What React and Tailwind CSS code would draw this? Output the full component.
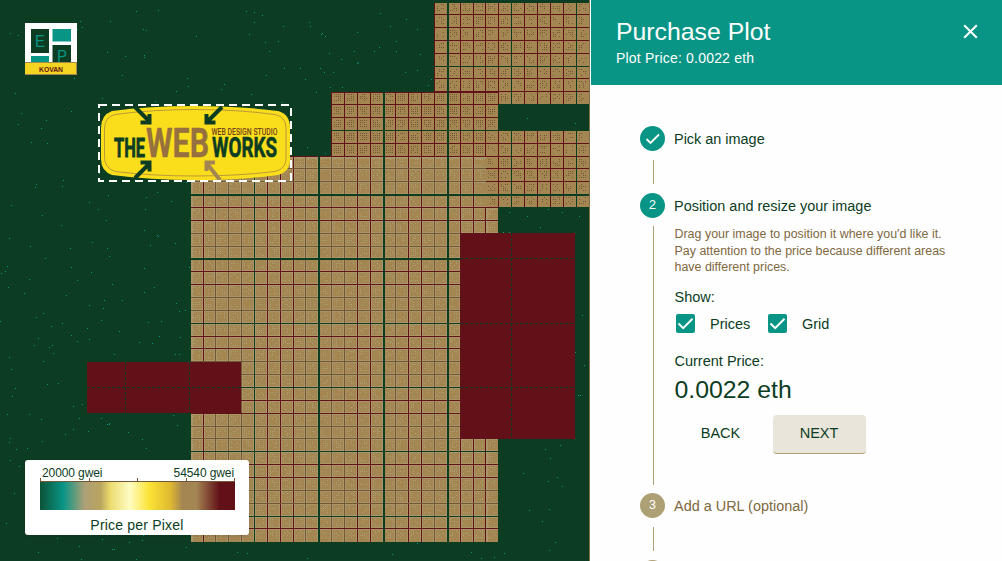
import React from "react";
import { X } from "lucide-react";

const PITCH = 12.86;
const COLS = Array.from({ length: 47 }, (_, i) => ({ at: 254 + (i - 19) * PITCH, major: (i - 19) % 5 === 0, i }));
const ROWS = Array.from({ length: 44 }, (_, i) => ({ at: 1.2 + i * PITCH, major: i % 5 === 0, i }));
const DARK = "#0c3d23";
const RED = "#631119";
const BROWN = "#735634";
const RED_COLS = [15, 20, 21, 22, 27, 28, 31, 32, 35, 36, 37];

const noise = (n) => {
  const v = Math.sin(n * 127.1 + 11.7) * 43758.5453;
  return v - Math.floor(v);
};

function specks(x, y, w, h, count, seed) {
  let d = "";
  for (let i = 0; i < count; i++) {
    const px = x + Math.floor(noise(seed + i * 2) * w);
    const py = y + Math.floor(noise(seed + i * 2 + 1) * h);
    d += `M${px} ${py}h1v1h-1z`;
  }
  return d;
}

function lattice(x, y, w, h, chance, seed) {
  let d = "";
  let n = seed;
  for (const c of COLS) {
    for (const r of ROWS) {
      const cx = Math.round(c.at) + 3;
      const cy = Math.round(r.at) + 3;
      if (cx < x || cy < y || cx + 9 > x + w + 1 || cy + 9 > y + h + 1) continue;
      for (let a = 0; a < 8; a += 2) {
        for (let b = 0; b < 8; b += 2) {
          n += 1;
          if (noise(n) < chance) d += `M${cx + a} ${cy + b}h1v1h-1z`;
        }
      }
    }
  }
  return d;
}

function Region({ x, y, w, h, fill, speck, chance, edge, seed }) {
  const cols = COLS.filter((c) => c.at >= x - 1 && c.at <= x + w - 1);
  const rows = ROWS.filter((r) => r.at >= y - 1 && r.at <= y + h - 1);
  const left = (c, by) => Math.max(x, Math.round(c.at) - by);
  const top = (r, by) => Math.max(y, Math.round(r.at) - by);
  return (
    <g shapeRendering="crispEdges">
      <rect x={x} y={y} width={w} height={h} fill={fill} />
      <path d={lattice(x, y, w, h, chance, seed)} fill={speck} />
      {edge && cols.map((c) => <rect key={c.i} x={left(c, 1)} y={y} width={3} height={h} fill={edge} opacity="0.6" />)}
      {edge && rows.map((r) => <rect key={r.i} x={x} y={top(r, 1)} width={w} height={3} fill={edge} opacity="0.6" />)}
      {cols.filter((c) => !c.major).map((c) => (
        <rect key={c.i} x={left(c, 0)} y={y} width={1} height={h} fill={!edge || RED_COLS.includes(c.i) ? RED : BROWN} />
      ))}
      {rows.filter((r) => !r.major).map((r) => (
        <rect key={r.i} x={x} y={top(r, 0)} width={w} height={1} fill={!edge || r.i % 5 === 1 || r.i % 5 === 2 ? RED : BROWN} />
      ))}
      {cols.filter((c) => c.major).map((c) => <rect key={c.i} x={left(c, 0)} y={y} width={c.at > 300 && c.at < 460 ? 2 : 1} height={h} fill={DARK} />)}
      {rows.filter((r) => r.major).map((r) => <rect key={r.i} x={x} y={top(r, 0)} width={w} height={r.at > 180 && r.at < 300 ? 2 : 1} fill={DARK} />)}
    </g>
  );
}

function PlotMap() {
  return (
    <svg className="block" width="590" height="561" viewBox="0 0 590 561">
      <rect width="590" height="561" fill={DARK} />
      <path d={specks(0, 0, 589, 561, 620, 5)} fill="#099586" shapeRendering="crispEdges" />
      <Region x={434} y={2} w={155} h={102} fill="#a48653" speck={BROWN} chance={0.5} seed={900} />
      <Region x={331} y={92} w={167} h={64} fill="#a48653" speck={BROWN} chance={0.85} seed={4000} />
      <Region x={485} y={130} w={104} h={77} fill="#a48653" speck={BROWN} chance={0.5} seed={9000} />
      <Region x={190} y={156} w={296} h={386} fill="#a48653" speck="#aea075" chance={0.4} edge="#aea075" seed={20000} />
      <Region x={485} y={207} w={13} h={335} fill="#a48653" speck="#aea075" chance={0.4} edge="#aea075" seed={70000} />
      <g shapeRendering="crispEdges">
        <rect x="460" y="233" width="115" height="206" fill={RED} />
        <rect x="87" y="362" width="154" height="51" fill={RED} />
        <path d="M511.500 233V439M460 258.500H575M460 323.500H575M460 387.500H575M125.500 362V413M189.500 362V413M87 387.500H241" stroke={DARK} strokeWidth="1" strokeDasharray="3 2" fill="none" />
        <rect x="589" width="1" height="561" fill="#83704a" />
      </g>
    </svg>
  );
}

function Badge() {
  return (
    <svg width="52" height="52" viewBox="0 0 52 52" fontFamily="Liberation Sans, sans-serif">
      <rect width="52" height="52" fill="#fff" />
      <path d="M6 6h18v24H6zM27.500 22H46v18H27.500z" fill={DARK} />
      <path d="M27.500 6H46v12.500H27.500zM6 33h18v7H6z" fill="#099586" />
      <text x="10" y="24" fontSize="17" textLength="10" lengthAdjust="spacingAndGlyphs" fill="#099586">E</text>
      <text x="32" y="39" fontSize="16" textLength="10" lengthAdjust="spacingAndGlyphs" fill="#099586">P</text>
      <rect y="39" width="52" height="13" fill="#f4d522" />
      <path d="M0 39.500H51.500V51.500H0" fill="none" stroke="#a48653" />
      <text x="14" y="48.500" fontSize="8" fontWeight="bold" textLength="24" lengthAdjust="spacingAndGlyphs" fill={RED}>KOVAN</text>
    </svg>
  );
}

function PlacedImage() {
  return (
    <svg className="overflow-visible" width="196" height="80" viewBox="97 103 196 80" fontWeight="bold">
      <path d="M112 111Q150 106 194 106Q240 106 278 111Q290 114 290 128V159Q290 172 278 175Q240 180 194 180Q150 180 112 175Q101 171 101 159V128Q101 115 112 111Z" fill="#fadd1b" />
      <path d="M115 114.500Q152 109.500 194 109.500Q238 109.500 275 114.500Q286 117 286 128V158Q286 169 275 171.500Q238 176 194 176Q152 176 115 171.500Q104.500 168 104.500 157V129Q104.500 117 115 114.500Z" fill="none" stroke="#b4913c" strokeWidth="0.9" />
      <g fill="none" stroke={DARK} strokeWidth="4">
        <path d="M135 107L149 121M149.500 114V122.500H140.500" />
        <path d="M222 107L208 121M206.500 114V122.500H215.500" />
        <path d="M135 178L149 164M149.500 171.500V162.500H140.500" />
        <path d="M220 180L208 165M206.500 171V162.500H215" stroke="#a48653" />
      </g>
      <g fontFamily="Roboto, sans-serif">
        <text x="114" y="157" fontSize="25" textLength="31" lengthAdjust="spacingAndGlyphs" fill={DARK} stroke={DARK} strokeWidth="0.8">THE</text>
        <text x="146" y="157" fontSize="41" textLength="63" lengthAdjust="spacingAndGlyphs" fill="#96703f" stroke="#96703f" strokeWidth="0.3">WEB</text>
        <text x="212" y="157" fontSize="27.500" textLength="65" lengthAdjust="spacingAndGlyphs" fill={DARK} stroke={DARK} strokeWidth="0.6">WORKS</text>
        <text x="211.500" y="134.500" fontSize="9" fontWeight="500" textLength="66" lengthAdjust="spacingAndGlyphs" fill="#74421f">WEB DESIGN STUDIO</text>
      </g>
      <rect x="99" y="105" width="192" height="76" fill="none" stroke="#fff" strokeWidth="2" strokeDasharray="8 5" />
    </svg>
  );
}

function Legend() {
  return (
    <div className="h-[75px] w-[224px] rounded-[3px] bg-white px-[15px] pt-[5px] text-[#0c3d23] shadow">
      <div className="flex h-4 justify-between pl-[2px] text-[12px] leading-4 tracking-[-0.1px]">
        <span>20000 gwei</span>
        <span>54540 gwei</span>
      </div>
      <svg className="block" width="196" height="29" viewBox="0 0 196 29">
        <defs>
          <linearGradient id="price-scale">
            <stop offset="0" stopColor="#0c5337" />
            <stop offset="0.12" stopColor="#099586" />
            <stop offset="0.23" stopColor="#aea075" />
            <stop offset="0.31" stopColor="#b9a45f" />
            <stop offset="0.36" stopColor="#ecdb6e" />
            <stop offset="0.46" stopColor="#fffcc4" />
            <stop offset="0.56" stopColor="#fbe335" />
            <stop offset="0.67" stopColor="#dfb831" />
            <stop offset="0.73" stopColor="#a48653" />
            <stop offset="0.8" stopColor="#a48653" />
            <stop offset="0.92" stopColor={RED} />
            <stop offset="1" stopColor={RED} />
          </linearGradient>
        </defs>
        <rect y="0" width="195" height="29" fill="url(#price-scale)" />
        <path d="M0 0.500H195" stroke={BROWN} />
      </svg>
      <div className="mt-[5px] text-center text-[14px] leading-5 tracking-[0.2px]">Price per Pixel</div>
      <svg className="absolute left-[15px] top-[18px]" width="196" height="4"><path d="M.5 0V4M49.500 0V4M97.500 0V4M146.500 0V4M194.500 0V4" stroke={BROWN} /></svg>
    </div>
  );
}

function Check({ round }) {
  return round ? (
    <svg width="25" height="25" viewBox="0 0 25 25">
      <circle cx="12.500" cy="12.500" r="12.500" fill="#099586" />
      <path d="M6.500 13L10.500 17L19 8.500" fill="none" stroke="#fff" strokeWidth="1.800" />
    </svg>
  ) : (
    <svg width="19" height="19" viewBox="0 0 19 19">
      <rect width="19" height="19" rx="2" fill="#099586" />
      <path d="M2.500 9.500L7.200 14.200L16.500 4.800" fill="none" stroke="#fff" strokeWidth="2" />
    </svg>
  );
}

function StepLabel({ icon, children, muted }) {
  return (
    <div className={muted ? "flex h-[25px] items-center gap-[9px] text-[#80683f]" : "flex h-[25px] items-center gap-[9px]"}>
      {icon}
      <span className="text-[14.45px] leading-5">{children}</span>
    </div>
  );
}

function Connector() {
  return <div className="my-[9px] ml-[13px] h-6 w-px bg-[#aea075]" />;
}

export default function App() {
  return (
    <div className="flex h-[561px] w-[1002px] overflow-hidden bg-white font-['Liberation_Sans',Arial,sans-serif] text-[#0c3d23]">
      <main className="relative h-[561px] w-[590px] shrink-0">
        <PlotMap />
        <div className="absolute left-[25px] top-[23px]"><Badge /></div>
        <div className="absolute left-[97px] top-[103px]"><PlacedImage /></div>
        <div className="absolute left-[25px] top-[460px]"><Legend /></div>
      </main>
      <aside className="ml-px flex w-[411px] flex-col bg-[#fefefe]">
        <header className="flex h-[85px] shrink-0 justify-between bg-[#099586] pl-[25px] pr-[21px] pt-[17px] text-white">
          <div>
            <h1 className="text-[24.8px] leading-[29px]">Purchase Plot</h1>
            <p className="mt-[2px] text-[14px] leading-5 tracking-[0.2px]">Plot Price: 0.0022 eth</p>
          </div>
          <X className="mt-[4px]" size={21} strokeWidth={1.9} viewBox="2 2 20 20" strokeLinecap="butt" />
        </header>
        <div className="pl-[49px] pt-[41px]">
          <StepLabel icon={<Check round />}>Pick an image</StepLabel>
          <Connector />
          <StepLabel icon={<span className="flex size-[25px] items-center justify-center rounded-full bg-[#099586] text-[12.5px] text-white">2</span>}>
            Position and resize your image
          </StepLabel>
          <div className="mb-2 ml-[13px] mt-2 h-[259px] border-l border-[#aea075] pl-[20.5px]">
            <p className="text-[12.45px] leading-[16.5px] text-[#80683f]">
              Drag your image to position it where you'd like it.
              <br />
              Pay attention to the price because different areas
              <br />
              have different prices.
            </p>
            <p className="mt-[11px] text-[14.5px] leading-5">Show:</p>
            <div className="mt-[7px] flex h-[19px] items-center pl-[1.5px] text-[14.5px] leading-5">
              <Check />
              <span className="relative top-px ml-[15px] w-[58px]">Prices</span>
              <Check />
              <span className="relative top-px ml-[15px]">Grid</span>
            </div>
            <p className="mt-[18px] text-[14.5px] leading-5">Current Price:</p>
            <p className="mt-[4px] text-[24.8px] leading-[30px]">0.0022 eth</p>
            <div className="mt-[10px] flex h-[38px] text-[14.5px]">
              <button className="h-[38px] w-[92px]">BACK</button>
              <button className="ml-[6px] h-[39px] w-[93px] rounded-[4px] border-b border-[#aea075] bg-[#e9e5db] pt-px">NEXT</button>
            </div>
          </div>
          <StepLabel muted icon={<span className="flex size-[25px] items-center justify-center rounded-full bg-[#aea075] text-[12.5px] text-white">3</span>}>
            Add a URL (optional)
          </StepLabel>
          <Connector />
          <div className="size-[25px] rounded-full bg-[#aea075]" />
        </div>
      </aside>
    </div>
  );
}
